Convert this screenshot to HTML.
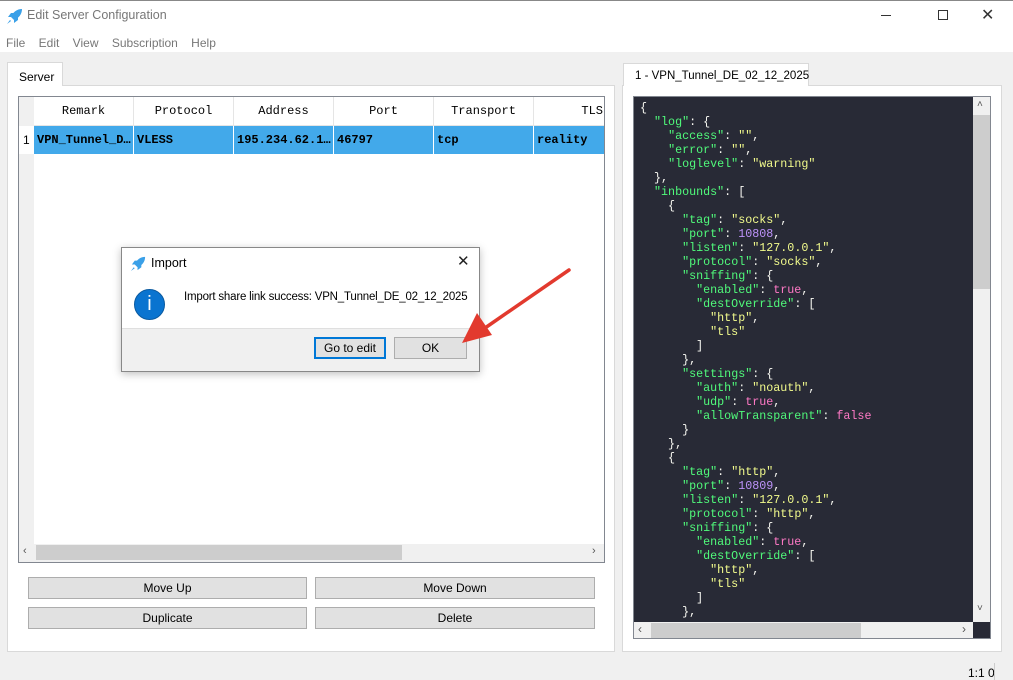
<!DOCTYPE html>
<html><head><meta charset="utf-8"><style>
*{box-sizing:border-box;margin:0;padding:0}
body{width:1013px;height:680px;background:#f0f0f0;font-family:"Liberation Sans",sans-serif;font-size:12px;color:#000;position:relative;overflow:hidden}
.abs{position:absolute;white-space:nowrap}
.mono{font-family:"Liberation Mono",monospace}
.btn{position:absolute;background:#e1e1e1;border:1px solid #adadad;text-align:center;line-height:20px;font-size:12px;white-space:nowrap}
.hd{position:absolute;top:0;height:29px;line-height:29px;text-align:center;border-right:1px solid #e5e5e5;font-size:12px}
.cell{position:absolute;top:0;height:28px;line-height:28px;padding-left:3px;border-right:1px solid #fff;font-weight:bold;font-size:12px;white-space:nowrap;overflow:hidden}
pre.abs{white-space:pre;font-family:"Liberation Mono",monospace;font-size:11.7px;line-height:14px;color:#f8f8f2}
.k{color:#50fa7b}.s{color:#f1fa8c}.n{color:#bd93f9}.b{color:#ff79c6}
</style></head><body>
<div class="abs" style="left:0;top:0;width:1013px;height:52px;background:#fff"></div>
<div class="abs" style="left:0;top:0;width:1013px;height:1px;background:#888"></div>
<svg class="abs" style="left:6px;top:7px" width="18" height="18" viewBox="0 0 18 18"><path d="M16 2 C11 2 7 5 5 10 L8 13 C13 11 16 7 16 2Z" fill="#3aa0e8"/><path d="M5 10 L2 10 L5 6 L8 6Z M8 13 L8 16 L12 13 L12 10Z" fill="#3aa0e8"/><path d="M4 13 L1 17 L5 14Z" fill="#3aa0e8"/></svg>
<div class="abs" style="left:27px;top:8px;color:#777;font-size:12.5px">Edit Server Configuration</div>
<div class="abs" style="left:881px;top:15px;width:10px;height:1px;background:#333"></div>
<div class="abs" style="left:938px;top:10px;width:10px;height:10px;border:1px solid #333"></div>
<div class="abs" style="left:981px;top:5px;font-size:16px;color:#333">✕</div>
<div class="abs" style="left:6px;top:36px;color:#777;font-size:12px">File&nbsp;&nbsp;&nbsp;&nbsp;Edit&nbsp;&nbsp;&nbsp;&nbsp;View&nbsp;&nbsp;&nbsp;&nbsp;Subscription&nbsp;&nbsp;&nbsp;&nbsp;Help</div>

<!-- left -->
<div class="abs" style="left:7px;top:62px;width:56px;height:24px;background:#fff;border:1px solid #d9d9d9;border-bottom:none;padding:7px 0 0 11px">Server</div>
<div class="abs" style="left:7px;top:85px;width:608px;height:567px;background:#fff;border:1px solid #d9d9d9"></div>
<div class="abs" style="left:8px;top:85px;width:54px;height:2px;background:#fff"></div>
<div class="abs" style="left:18px;top:96px;width:587px;height:467px;border:1px solid #828790;background:#fff;overflow:hidden">
 <div class="abs" style="left:0;top:0;width:15px;height:465px;background:#f0f0f0"></div>
 <div class="abs" style="left:15px;top:0;width:572px;height:29px;background:#fff;border-bottom:1px solid #e5e5e5">
  <div class="hd mono" style="left:0;width:100px">Remark</div>
  <div class="hd mono" style="left:100px;width:100px">Protocol</div>
  <div class="hd mono" style="left:200px;width:100px">Address</div>
  <div class="hd mono" style="left:300px;width:100px">Port</div>
  <div class="hd mono" style="left:400px;width:100px">Transport</div>
  <div class="hd mono" style="left:500px;width:100px;text-align:right;padding-right:30px">TLS</div>
 </div>
 <div class="abs" style="left:0;top:29px;width:15px;height:28px;background:#fff;line-height:28px;padding-left:4px">1</div>
 <div class="abs" style="left:15px;top:29px;width:572px;height:28px;background:#42a9ea">
  <div class="cell mono" style="left:0;width:100px">VPN_Tunnel_D…</div>
  <div class="cell mono" style="left:100px;width:100px">VLESS</div>
  <div class="cell mono" style="left:200px;width:100px">195.234.62.1…</div>
  <div class="cell mono" style="left:300px;width:100px">46797</div>
  <div class="cell mono" style="left:400px;width:100px">tcp</div>
  <div class="cell mono" style="left:500px;width:80px">reality</div>
 </div>
 <div class="abs" style="left:0;top:447px;width:587px;height:18px;background:#f0f0f0"></div>
 <div class="abs" style="left:17px;top:448px;width:366px;height:15px;background:#cdcdcd"></div>
 <div class="abs" style="left:4px;top:448px;color:#555;font-size:11px">‹</div>
 <div class="abs" style="left:573px;top:448px;color:#555;font-size:11px">›</div>
</div>
<div class="btn" style="left:28px;top:577px;width:279px;height:22px">Move Up</div>
<div class="btn" style="left:315px;top:577px;width:280px;height:22px">Move Down</div>
<div class="btn" style="left:28px;top:607px;width:279px;height:22px">Duplicate</div>
<div class="btn" style="left:315px;top:607px;width:280px;height:22px">Delete</div>

<!-- right -->
<div class="abs" style="left:623px;top:63px;width:186px;height:23px;background:#fff;border:1px solid #d9d9d9;border-bottom:none;padding:6px 0 0 11px;font-size:11.5px">1 - VPN_Tunnel_DE_02_12_2025</div>
<div class="abs" style="left:622px;top:85px;width:380px;height:567px;background:#fff;border:1px solid #d9d9d9"></div>
<div class="abs" style="left:624px;top:85px;width:184px;height:2px;background:#fff"></div>
<div class="abs" style="left:633px;top:96px;width:358px;height:543px;background:#282a36;border:1px solid #828790;overflow:hidden">
<pre class="abs" style="left:6px;top:4px">{
  <span class="k">"log"</span>: {
    <span class="k">"access"</span>: <span class="s">""</span>,
    <span class="k">"error"</span>: <span class="s">""</span>,
    <span class="k">"loglevel"</span>: <span class="s">"warning"</span>
  },
  <span class="k">"inbounds"</span>: [
    {
      <span class="k">"tag"</span>: <span class="s">"socks"</span>,
      <span class="k">"port"</span>: <span class="n">10808</span>,
      <span class="k">"listen"</span>: <span class="s">"127.0.0.1"</span>,
      <span class="k">"protocol"</span>: <span class="s">"socks"</span>,
      <span class="k">"sniffing"</span>: {
        <span class="k">"enabled"</span>: <span class="b">true</span>,
        <span class="k">"destOverride"</span>: [
          <span class="s">"http"</span>,
          <span class="s">"tls"</span>
        ]
      },
      <span class="k">"settings"</span>: {
        <span class="k">"auth"</span>: <span class="s">"noauth"</span>,
        <span class="k">"udp"</span>: <span class="b">true</span>,
        <span class="k">"allowTransparent"</span>: <span class="b">false</span>
      }
    },
    {
      <span class="k">"tag"</span>: <span class="s">"http"</span>,
      <span class="k">"port"</span>: <span class="n">10809</span>,
      <span class="k">"listen"</span>: <span class="s">"127.0.0.1"</span>,
      <span class="k">"protocol"</span>: <span class="s">"http"</span>,
      <span class="k">"sniffing"</span>: {
        <span class="k">"enabled"</span>: <span class="b">true</span>,
        <span class="k">"destOverride"</span>: [
          <span class="s">"http"</span>,
          <span class="s">"tls"</span>
        ]
      },</pre>
 <div class="abs" style="left:339px;top:0;width:17px;height:525px;background:#f0f0f0"></div>
 <div class="abs" style="left:339px;top:18px;width:17px;height:174px;background:#cdcdcd"></div>
 <div class="abs" style="left:343px;top:2px;font-size:10px;color:#555">˄</div>
 <div class="abs" style="left:343px;top:506px;font-size:10px;color:#555">˅</div>
 <div class="abs" style="left:0;top:525px;width:339px;height:17px;background:#f0f0f0"></div>
 <div class="abs" style="left:17px;top:526px;width:210px;height:15px;background:#cdcdcd"></div>
 <div class="abs" style="left:4px;top:525px;color:#555">‹</div>
 <div class="abs" style="left:328px;top:525px;color:#555">›</div>
</div>
<div class="abs" style="left:968px;top:666px;font-size:12px">1:1 0</div>
<div class="abs" style="left:994px;top:663px;width:1px;height:17px;background:#ccc"></div>

<!-- dialog -->
<div class="abs" style="left:121px;top:247px;width:359px;height:125px;background:#fff;border:1px solid #888;box-shadow:0 2px 8px rgba(0,0,0,.25)">
 <svg class="abs" style="left:8px;top:7px" width="17" height="17" viewBox="0 0 18 18"><path d="M16 2 C11 2 7 5 5 10 L8 13 C13 11 16 7 16 2Z" fill="#3aa0e8"/><path d="M5 10 L2 10 L5 6 L8 6Z M8 13 L8 16 L12 13 L12 10Z" fill="#3aa0e8"/><path d="M4 13 L1 17 L5 14Z" fill="#3aa0e8"/></svg>
 <div class="abs" style="left:29px;top:8px;font-size:12.5px">Import</div>
 <div class="abs" style="left:335px;top:4px;font-size:15px;color:#222">✕</div>
 <div class="abs" style="left:12px;top:41px;width:31px;height:31px;border-radius:50%;background:#0a74d0;border:1px solid #0a5aa0;color:#fff;text-align:center;font-size:20px;line-height:29px">i</div>
 <div class="abs" style="left:62px;top:43px;font-size:11.5px;letter-spacing:-0.2px">Import share link success: VPN_Tunnel_DE_02_12_2025</div>
 <div class="abs" style="left:0;top:80px;width:357px;height:43px;background:#f0f0f0;border-top:1px solid #dfdfdf"></div>
 <div class="btn" style="left:192px;top:89px;width:72px;height:22px;border:2px solid #0078d7;line-height:18px">Go to edit</div>
 <div class="btn" style="left:272px;top:89px;width:73px;height:22px">OK</div>
</div>
<svg class="abs" style="left:0;top:0" width="1013" height="680"><line x1="569" y1="270" x2="485" y2="328" stroke="#e23a2e" stroke-width="3.5" stroke-linecap="round"/><path d="M462 343 L477 313 L492 335Z" fill="#e23a2e"/></svg>
</body></html>
